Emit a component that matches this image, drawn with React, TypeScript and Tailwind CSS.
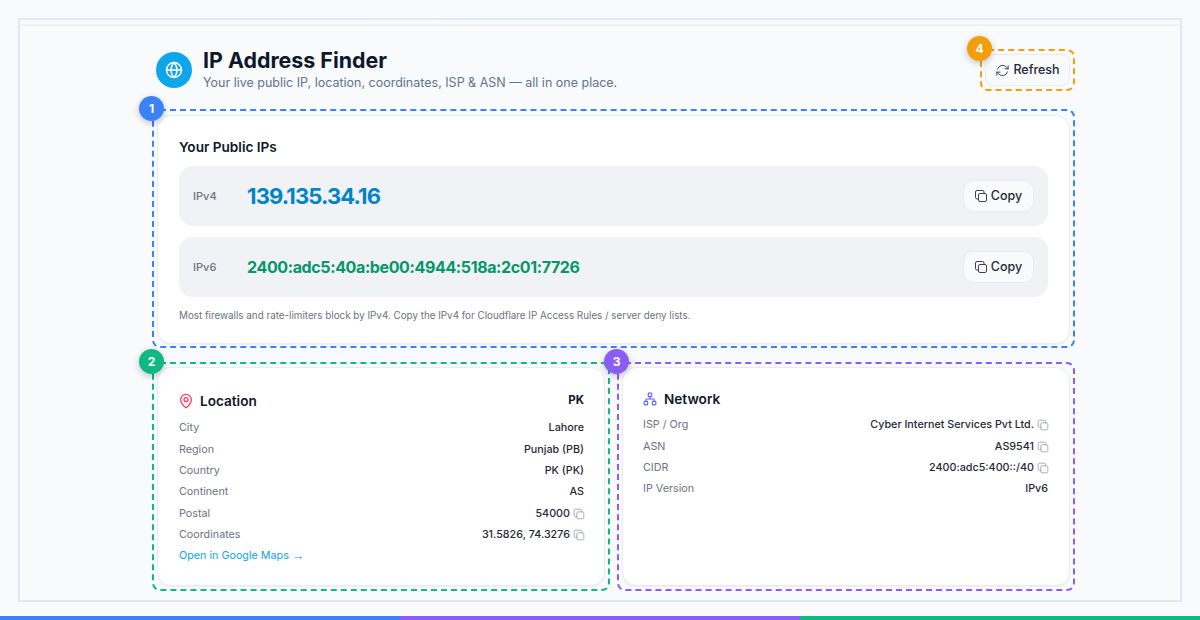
import { Globe, MapPin, Network } from "lucide-react";
import { HiOutlineArrowPath, HiOutlineSquare2Stack } from "react-icons/hi2";

const Badge = ({ n, className }: { n: number; className: string }) => (
  <span
    className={`absolute -left-[15px] -top-[15px] flex h-[25px] w-[25px] items-center justify-center rounded-full text-[12px] font-bold text-white shadow-[0_2px_6px_rgba(15,23,42,0.25)] ${className}`}
  >
    {n}
  </span>
);

const Row = ({ label, value, copy }: { label: string; value: string; copy?: boolean }) => (
  <div className="flex h-[21.4px] items-center justify-between text-[10.75px]">
    <span className="text-[#6b7280]">{label}</span>
    <span className="flex items-center gap-[2px] font-medium text-[#1f2937]">
      {value}
      {copy && <HiOutlineSquare2Stack className="-mr-[2px] h-[14px] w-[14px] text-[#9ca3af]" />}
    </span>
  </div>
);

const IpRow = ({ label, ip, className }: { label: string; ip: string; className: string }) => (
  <div className="flex h-[60px] items-center rounded-[14px] bg-[#f1f2f6] px-[14px]">
    <span className="w-[54px] text-[11px] font-medium text-[#6b7280]">{label}</span>
    <span className={`flex-1 font-bold ${className}`}>{ip}</span>
    <button className="flex h-[32px] w-[71px] items-center justify-center gap-[2px] rounded-[10px] border border-[#e9ebef] bg-[#f8fafc] pr-[2px] pt-px text-[12.5px] font-medium text-[#1f2937]">
      <HiOutlineSquare2Stack className="-mt-px h-[16px] w-[16px] text-[#374151]" />
      Copy
    </button>
  </div>
);

export default function App() {
  return (
    <div className="flex h-[620px] flex-col overflow-hidden bg-[#f8fafc] font-['Inter',sans-serif] text-[#0f172a]">
      <div className="mx-[18px] mt-[18px] flex h-[584px] flex-col border-2 border-[#e2e8f0]">
        <div className="relative h-[6px] shrink-0 border-b-2 border-[#eef1f5]">
          <span className="absolute -top-px left-[345px] h-px w-[72px] bg-[#e3edea]" />
          <span className="absolute -top-px left-[452px] h-px w-[88px] bg-[#e6e6f5]" />
        </div>
        <div className="ml-[132px] w-[923px] pt-[23px]">
          <header className="flex h-[42px] items-start justify-between">
            <div className="flex items-start gap-[11px] pl-[4px]">
              <span className="mt-[3px] flex h-[36px] w-[36px] items-center justify-center rounded-full bg-[#0ea5e9]">
                <Globe className="h-[18px] w-[18px] text-white" strokeWidth={2} />
              </span>
              <div className="-mt-[2px]">
                <h1 className="text-[21.4px] leading-[26px] font-bold text-[#0f172a]">IP Address Finder</h1>
                <p className="text-[12.5px] leading-[20px] text-[#64748b]">
                  Your live public IP, location, coordinates, ISP &amp; ASN — all in one place.
                </p>
              </div>
            </div>
            <div className="relative rounded-[8px] border-2 border-dashed border-[#f59e0b] p-[3px]">
              <Badge n={4} className="bg-[#f59e0b]" />
              <button className="flex h-[32px] w-[85px] items-center justify-center gap-[3px] rounded-[8px] border border-[#e9ebef] bg-[#f8fafc] pt-px text-[12.5px] font-medium text-[#1f2937]">
                <HiOutlineArrowPath className="h-[15px] w-[15px] text-[#374151]" />
                Refresh
              </button>
            </div>
          </header>

          <section className="relative mt-[18px] h-[239px] rounded-[8px] border-2 border-dashed border-[#3b82f6] px-[3px] pb-[2px] pt-[4px]">
            <Badge n={1} className="bg-[#3b82f6]" />
            <div className="h-full rounded-[14px] border border-[#e9edf2] bg-white px-[21px] pt-[20px] shadow-[0_1px_2px_rgba(15,23,42,0.05)]">
              <h2 className="text-[13.6px] leading-[22px] font-semibold text-[#0f172a]">Your Public IPs</h2>
              <div className="mt-[8px] flex flex-col gap-[11px]">
                <IpRow label="IPv4" ip="139.135.34.16" className="text-[22px] tracking-[-0.85px] text-[#0284c7]" />
                <IpRow label="IPv6" ip="2400:adc5:40a:be00:4944:518a:2c01:7726" className="text-[16px] tracking-[-0.38px] text-[#059669]" />
              </div>
              <p className="mt-[11px] text-[9.83px] text-[#6b7280]">
                Most firewalls and rate-limiters block by IPv4. Copy the IPv4 for Cloudflare IP Access Rules / server deny lists.
              </p>
            </div>
          </section>

          <div className="mt-[14px] grid grid-cols-2 gap-[7px]">
            <section className="relative h-[229px] rounded-[8px] border-2 border-dashed border-[#10b981] p-[3px]">
              <Badge n={2} className="bg-[#10b981]" />
              <div className="h-full rounded-[14px] border border-[#e9edf2] bg-white pl-[21px] pr-[20px] pt-[22px] shadow-[0_1px_2px_rgba(15,23,42,0.05)]">
                <div className="mb-[5.5px] flex items-center justify-between">
                  <h3 className="flex items-center gap-[6px] text-[13.6px] leading-[22px] font-semibold">
                    <MapPin className="-ml-px h-[16px] w-[16px] text-[#f43f5e]" />
                    Location
                  </h3>
                  <span className="text-[11.5px] font-bold">PK</span>
                </div>
                <Row label="City" value="Lahore" />
                <Row label="Region" value="Punjab (PB)" />
                <Row label="Country" value="PK (PK)" />
                <Row label="Continent" value="AS" />
                <Row label="Postal" value="54000" copy />
                <Row label="Coordinates" value="31.5826, 74.3276" copy />
                <a className="flex h-[21.4px] items-center gap-[3px] text-[10.75px] text-[#0ea5e9]">
                  Open in Google Maps
                  <span className="font-['Liberation_Sans',sans-serif] text-[12.5px] leading-none">→</span>
                </a>
              </div>
            </section>
            <section className="relative h-[229px] rounded-[8px] border-2 border-dashed border-[#8b5cf6] p-[3px]">
              <Badge n={3} className="bg-[#8b5cf6]" />
              <div className="h-full rounded-[14px] border border-[#e9edf2] bg-white pl-[20px] pr-[21px] pt-[20px] shadow-[0_1px_2px_rgba(15,23,42,0.05)]">
                <h3 className="mb-[4.5px] flex items-center gap-[7px] text-[13.6px] leading-[22px] font-semibold">
                  <Network className="h-[14px] w-[14px] text-[#6366f1]" />
                  Network
                </h3>
                <Row label="ISP / Org" value="Cyber Internet Services Pvt Ltd." copy />
                <Row label="ASN" value="AS9541" copy />
                <Row label="CIDR" value="2400:adc5:400::/40" copy />
                <Row label="IP Version" value="IPv6" />
              </div>
            </section>
          </div>
        </div>
      </div>
      <div className="mt-auto flex h-[4px] shrink-0">
        <div className="flex-1 bg-[#3b82f6]" />
        <div className="flex-1 bg-[#8b5cf6]" />
        <div className="flex-1 bg-[#10b981]" />
      </div>
    </div>
  );
}
